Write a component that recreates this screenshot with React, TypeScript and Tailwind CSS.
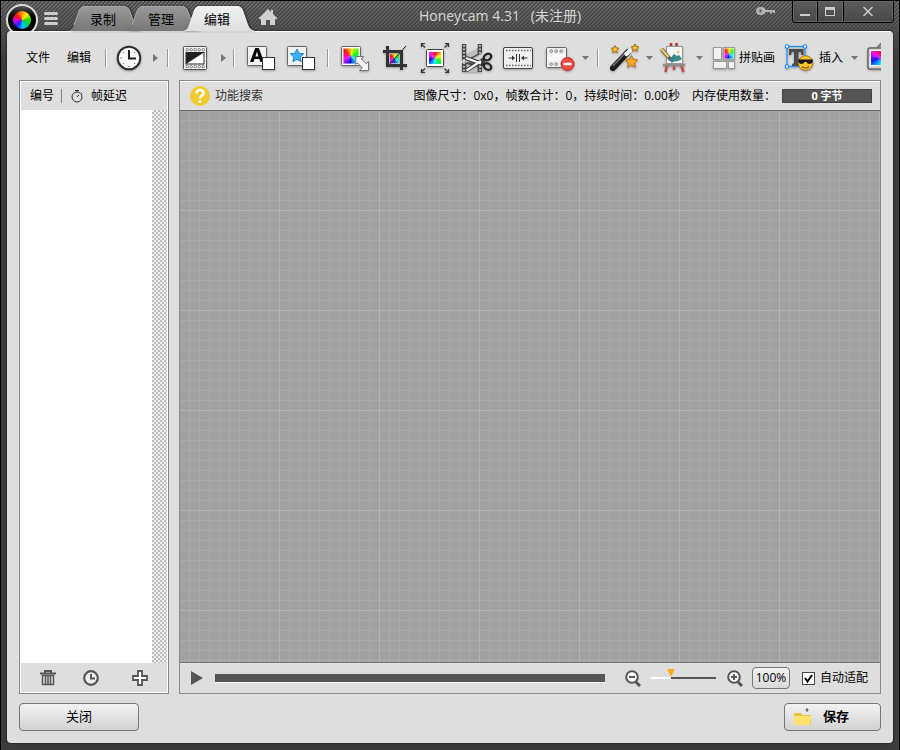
import { useState } from "react";
import type { ReactNode } from "react";
import clsx from "clsx";

const WEDGES = 24;

type WheelProps = {
  x: number;
  y: number;
  width: number;
  height: number;
  start?: number;
};

// hue wheel clipped to a rectangle, used by most of the image tools
function Wheel({ x, y, width, height, start = -60 }: WheelProps) {
  const slices = Array.from({ length: WEDGES }, (_, i) => {
    const a = ((start - 90 + (i * 360) / WEDGES) * Math.PI) / 180;
    const b = ((start - 90 + ((i + 1.2) * 360) / WEDGES) * Math.PI) / 180;
    const points = `0,0 ${20 * Math.cos(a)},${20 * Math.sin(a)} ${20 * Math.cos(b)},${20 * Math.sin(b)}`;
    return <polygon key={i} points={points} fill={`hsl(${(i * 360) / WEDGES} 90% 50%)`} />;
  });

  return (
    <svg x={x} y={y} width={width} height={height} viewBox="-10 -10 20 20" preserveAspectRatio="none">
      {slices}
    </svg>
  );
}

function Icon({ children, className = "w-8" }: { children: ReactNode; className?: string }) {
  return (
    <svg
      viewBox={className === "w-7" ? "0 0 28 32" : "0 0 32 32"}
      className={clsx("h-8 shrink-0 drop-shadow-[0_1px_1px_rgba(0,0,0,0.3)]", className)}
      aria-hidden="true"
    >
      {children}
    </svg>
  );
}

function Holes({ y, from = 6, to = 26, step = 5 }: { y: number; from?: number; to?: number; step?: number }) {
  const holes = [];
  for (let x = from; x <= to; x += step) holes.push(x);
  return (
    <>
      {holes.map((x) => (
        <rect key={x} x={x - 1} y={y - 1} width="2.4" height="2.4" rx="1" fill="#fff" stroke="#666" strokeWidth=".9" />
      ))}
    </>
  );
}

const Star = ({ x, y, r, fill, stroke }: { x: number; y: number; r: number; fill: string; stroke: string }) => {
  const points = Array.from({ length: 10 }, (_, i) => {
    const radius = i % 2 ? r * 0.48 : r;
    const a = (i * Math.PI) / 5 - Math.PI / 2;
    return `${x + radius * Math.cos(a)},${y + radius * Math.sin(a)}`;
  }).join(" ");
  return <polygon points={points} fill={fill} stroke={stroke} strokeLinejoin="round" />;
};

const ClockIcon = () => (
  <Icon>
    <circle cx="16" cy="16" r="11.3" fill="#f8f8f8" stroke="#2d2d2d" strokeWidth="2" />
    <path d="M16 8v8.5h7" fill="none" stroke="#222" strokeWidth="2" />
    <path d="M16 25v-1M7.5 16h1M10 10l.6.6M22 10l-.6.6M10 22l.6-.6M22 22l-.6-.6" stroke="#333" />
  </Icon>
);

const FadeIcon = () => (
  <Icon>
    <rect x="4.5" y="4.5" width="23" height="23" rx="1" fill="#f3f3f3" stroke="#555" />
    <Holes y={7.5} from={8} to={24} step={4} />
    <Holes y={24.5} from={8} to={24} step={4} />
    <rect x="7" y="10.5" width="18" height="11.5" fill="#fff" stroke="#222" />
    <path d="M7 22V10.5h18z" fill="#222" />
  </Icon>
);

const TextFrameIcon = () => (
  <Icon>
    <rect x="2.5" y="4.5" width="19" height="19" rx="1" fill="#f1f1f1" stroke="#666" />
    <path d="M5 20 10.2 6h3.6L19 20h-3.7l-1-3H9.5l-1 3zm5.4-5.6h3L12 9.6z" fill="#080808" />
    <rect x="17.5" y="15.5" width="12" height="12" fill="#fff" stroke="#333" />
  </Icon>
);

const StarFrameIcon = () => (
  <Icon>
    <rect x="2.5" y="4.5" width="19" height="19" rx="1" fill="#f1f1f1" stroke="#666" />
    <Star x={12} y={14} r={7} fill="#3db4f5" stroke="#1d83cf" />
    <rect x="17.5" y="15.5" width="12" height="12" fill="#fff" stroke="#333" />
  </Icon>
);

const ResizeIcon = () => (
  <Icon>
    <rect x="2.5" y="4.5" width="19" height="19" rx="1" fill="#fff" stroke="#666" />
    <Wheel x={4.5} y={6.5} width={15} height={15} />
    <path
      d="M17 14.5h7.5l-2.3 2.3 5 5 2.3-2.3V28.5h-9l2.8-2.7-5-5-1.8 1.7z"
      fill="#f5f5f5"
      stroke="#777"
    />
  </Icon>
);

const CropIcon = () => (
  <Icon>
    <Wheel x={11} y={12} width={9} height={9} />
    <path d="M10 23 27 4" stroke="#222" />
    <path d="M8.5 4v19.500H28M4 9.5h18.500V28" fill="none" stroke="#333" strokeWidth="3" />
  </Icon>
);

const FitIcon = () => (
  <Icon>
    <rect x="7.5" y="7.5" width="17" height="17" rx="1" fill="#fff" stroke="#444" />
    <Wheel x={10} y={10} width={12} height={12} start={0} />
    <path
      d="M2.5 5V1.500H6M2 1.500l4 4M26 1.500h3.500V5M29.500 1.500l-4 4M2.500 27v3.500H6M2 30.500l4-4M26 30.500h3.500V27M29.500 30.500l-4-4"
      fill="none"
      stroke="#3b3b3b"
      strokeWidth="1.2"
      strokeDasharray="7 0"
    />
  </Icon>
);

const CutIcon = () => (
  <Icon>
    <path d="M1 2h20v9L8 18H1zM1 21l8-1 12 5v5H1z" fill="#4c4c4c" />
    <path d="M5.5 2h11v10L7 17H5.500zM5.500 22l11 3v5h-11z" fill="#bdbdbd" />
    <path d="M5.500 2h11v4l-11 6z" fill="#dcdcdc" />
    <path d="M3 3v27M19 3v27" stroke="#e8e8e8" strokeWidth="1.500" strokeDasharray="1.500 2" />
    <path d="M5 28.500 24 17" stroke="#333" strokeWidth="4" />
    <path d="M5 16 24 23" stroke="#333" strokeWidth="4" />
    <path d="M5.500 28.500 20 19M5 16l15 5.500" stroke="#f5f5f5" strokeWidth="2.200" />
    <ellipse cx="26.5" cy="15" rx="4" ry="3" transform="rotate(-30 26.5 15)" fill="none" stroke="#222" strokeWidth="2.2" />
    <ellipse cx="26.5" cy="24.5" rx="4" ry="3" transform="rotate(30 26.5 24.5)" fill="none" stroke="#222" strokeWidth="2.2" />
  </Icon>
);

const TrimIcon = () => (
  <Icon>
    <rect x="1.5" y="5.5" width="29" height="21" rx="1.5" fill="#f0f0f0" stroke="#444" />
    <path d="M4 8.5h25M4 23.5h25" stroke="#666" strokeWidth="1.5" strokeDasharray="1.5 1.5" />
    <path d="M14.5 12v8M17.5 12v8" stroke="#333" />
    <path d="M6.500 16h5M25.500 16h-5" stroke="#333" />
    <path d="m10 13.5 3 2.5-3 2.500zM22 13.500 19 16l3 2.500z" fill="#333" />
  </Icon>
);

const RemoveFramesIcon = () => (
  <Icon>
    <rect x="3.5" y="5.500" width="20" height="20" rx="1" fill="#eee" stroke="#666" />
    <Holes y={9} from={8} to={18} step={5} />
    <Holes y={22} from={8} to={13} step={5} />
    <path d="M4 12.500h19v6H4z" fill="#fafafa" />
    <circle cx="24.5" cy="22" r="6.500" fill="#ef4a42" stroke="#bd2522" />
    <path d="M20.500 22h8" stroke="#fff" strokeWidth="2.500" />
  </Icon>
);

const EffectsIcon = () => (
  <Icon>
    <path d="M4 26 19 10" stroke="#1c1c1c" strokeWidth="6" strokeLinecap="round" />
    <path d="m4 24 12-13" stroke="#777" strokeWidth="1.5" />
    <path d="m17.500 12 3-3" stroke="#f6f6f6" strokeWidth="4.500" strokeLinecap="round" />
    <Star x={6} y={7.5} r={4} fill="#ffc02e" stroke="#a97213" />
    <Star x={26} y={6} r={4} fill="#ffc02e" stroke="#a97213" />
    <Star x={22.5} y={20} r={6.500} fill="#ffad26" stroke="#b06d0e" />
  </Icon>
);

const PaintIcon = () => (
  <Icon>
    <path d="m9.500 21-2 9M22.500 21l3 9M16 23v5" stroke="#c9483c" strokeWidth="2.500" />
    <path d="M13 1v5M18.500 1v5" stroke="#b3392f" strokeWidth="2.500" />
    <rect x="8.500" y="4.500" width="16" height="17" fill="#f2f4f5" stroke="#999" />
    <path d="M5 23h22" stroke="#8d8d8d" strokeWidth="2.500" />
    <path d="M11 18c3 2 9 2 13-1l-3-4-2 1-3-2z" fill="#3d8a86" />
    <circle cx="20" cy="10" r="1.200" fill="#ffb84d" />
    <path d="M3.500 7 13 18" stroke="#665533" strokeWidth="3.500" />
    <path d="m3.500 7 7 8" stroke="#f0cf6d" strokeWidth="2.200" />
    <path d="m12 16 3 4" stroke="#2e7fa6" strokeWidth="3" />
  </Icon>
);

const CollageIcon = () => (
  <Icon className="w-7">
    <rect x="3.5" y="5.5" width="8" height="12" fill="#f1f1f1" stroke="#999" />
    <rect x="13.5" y="5.5" width="11" height="12" fill="#fff" stroke="#999" />
    <Wheel x={14.5} y={6.5} width={9} height={10} />
    <rect x="3.5" y="19.5" width="13" height="7" fill="#f1f1f1" stroke="#999" />
    <rect x="18.5" y="19.5" width="6" height="7" fill="#f1f1f1" stroke="#999" />
  </Icon>
);

const InsertIcon = () => (
  <Icon>
    <path d="M6 7h14.500v6h-2l-1-3h-2v11l2 1v2H9v-2l2-1V10H9l-1 3H6z" fill="#4d4d4d" />
    <rect x="4" y="4.5" width="18" height="20" fill="none" stroke="#1a8fff" strokeWidth="1.200" />
    <path d="M2.5 3h3v3h-3zM20.5 3h3v3h-3zM2.5 23h3v3h-3z" fill="#fff" stroke="#1a8fff" />
    <circle cx="22.5" cy="21" r="7.300" fill="#ffc629" stroke="#a56f0f" />
    <path d="M15 17.500h15l-.5 2.500c-1 2.500-5 2.500-6 0h-2c-1 2.500-5 2.500-6 0z" fill="#191919" />
    <path d="M19 24.500c2 2 5 2 7 0" fill="none" stroke="#8b5309" strokeWidth="1.200" />
  </Icon>
);

const MonitorIcon = () => (
  <Icon>
    <path d="m16 1-5 5" stroke="#777" strokeWidth="2" />
    <rect x="2" y="6" width="28" height="21" rx="2" fill="#d8d8d8" stroke="#666" strokeWidth="1.500" />
    <rect x="4" y="8" width="24" height="16" fill="#fff" />
    <Wheel x={5} y={9} width={22} height={14} start={0} />
  </Icon>
);

type ToolProps = {
  label: string;
  children: ReactNode;
  className?: string;
};

function Tool({ label, children, className }: ToolProps) {
  return (
    <button type="button" aria-label={label} className={clsx("flex shrink-0 items-center", className)}>
      {children}
    </button>
  );
}

function Separator({ className = "ml-[9px]" }: { className?: string }) {
  return <span className={clsx("mr-2.5 h-[18px] w-[2px] shrink-0 border-l border-r border-l-[#999] border-r-white", className)} />;
}

function More({ right = false, className }: { right?: boolean; className?: string }) {
  return (
    <button type="button" aria-label="更多" className={clsx("shrink-0", className)}>
      {right ? (
        <svg viewBox="0 0 5 8" className="h-2 w-[5px]">
          <path d="M0 0 5 4 0 8z" fill="#777" />
        </svg>
      ) : (
        <svg viewBox="0 0 7 4" className="h-1 w-[7px]">
          <path d="M0 0h7L3.5 4z" fill="#777" />
        </svg>
      )}
    </button>
  );
}

function Toolbar() {
  return (
    <div className="flex h-12 items-center overflow-hidden pt-1 text-xs">
      <button type="button" className="ml-[7px] shrink-0">文件</button>
      <button type="button" className="ml-[17px] shrink-0">编辑</button>
      <Separator className="ml-3.5" />
      <Tool label="时间" className="-ml-1"><ClockIcon /></Tool>
      <More right className="ml-2" />
      <Separator />
      <Tool label="淡入淡出"><FadeIcon /></Tool>
      <More right className="ml-2.5" />
      <Separator className="ml-[7px]" />
      <div className="flex shrink-0 gap-2">
        <Tool label="文字帧"><TextFrameIcon /></Tool>
        <Tool label="图形帧"><StarFrameIcon /></Tool>
      </div>
      <Separator className="ml-2.5" />
      <div className="flex shrink-0 gap-2">
        <Tool label="调整大小"><ResizeIcon /></Tool>
        <Tool label="裁剪"><CropIcon /></Tool>
        <Tool label="适应"><FitIcon /></Tool>
      </div>
      <div className="ml-2.5 flex shrink-0 gap-[9px]">
        <Tool label="剪切帧"><CutIcon /></Tool>
        <Tool label="修剪"><TrimIcon /></Tool>
        <Tool label="删除帧"><RemoveFramesIcon /></Tool>
      </div>
      <More className="ml-[7px]" />
      <Separator className="ml-2" />
      <Tool label="效果"><EffectsIcon /></Tool>
      <More className="ml-[5px]" />
      <Tool label="绘画" className="ml-[5px]"><PaintIcon /></Tool>
      <More className="ml-1.5" />
      <Tool label="拼贴画" className="ml-[7px] gap-px"><CollageIcon />拼贴画</Tool>
      <Tool label="插入" className="ml-2 gap-1"><InsertIcon />插入</Tool>
      <More className="ml-2" />
      <Tool label="显示" className="ml-2"><MonitorIcon /></Tool>
    </div>
  );
}

function Tab({ label, active = false, className }: { label: string; active?: boolean; className?: string }) {
  return (
    <button
      type="button"
      className={clsx("relative flex h-[25px] items-center justify-center pt-0.5 pr-1 text-[13px] text-black", className)}
    >
      <svg
        viewBox="0 0 74 25"
        preserveAspectRatio="none"
        className="absolute inset-0 h-full w-full drop-shadow-[1px_0_1px_rgba(0,0,0,0.5)]"
        aria-hidden="true"
      >
        <defs>
          <linearGradient id={active ? "tab-on" : "tab-off"} x2="0" y2="1">
            <stop stopColor={active ? "#f1f1f1" : "#999"} />
            <stop offset="1" stopColor={active ? "#dedede" : "#777"} />
          </linearGradient>
        </defs>
        <path
          d="M0 25c4-1 5-3 6-6L11 5c1-3 3-5 6-5h38c4 0 6 2 7 5l5 14c1 3 3 5 7 6z"
          fill={active ? "url(#tab-on)" : "url(#tab-off)"}
        />
        {!active && <path d="M6 19 11 5c1-3 3-4.500 6-4.500h38c4 0 6 2 7 5l5 14" fill="none" stroke="#a8a8a8" />}
      </svg>
      <span className="relative">{label}</span>
    </button>
  );
}

function TitleBar() {
  return (
    <header className="relative flex h-[31px] items-end border-t border-black pl-[5px]">
      <div className="h-[27px] w-8 overflow-hidden">
        <div className="flex h-8 w-8 items-center justify-center rounded-full border-2 border-[#ddd] bg-linear-to-b from-[#555] via-black to-black">
          <div className="h-[18px] w-[18px] rounded-full bg-[conic-gradient(from_-50deg,#f11,#f80,#fe0,#3d0,#0c6,#0bf,#22f,#c0e,#f11)]" />
        </div>
      </div>
      <button type="button" aria-label="菜单" className="mb-1.5 ml-1.5 flex w-3.5 flex-col gap-[2px]">
        <span className="h-[3px] rounded-full bg-[#ccc]" />
        <span className="h-[3px] rounded-full bg-[#ccc]" />
        <span className="h-[3px] rounded-full bg-[#ccc]" />
      </button>
      <nav className="ml-2.5 flex">
        <Tab label="录制" className="w-[74px]" />
        <Tab label="管理" className="-ml-4 w-[74px]" />
        <Tab label="编辑" active className="z-10 -ml-[17px] w-[72px]" />
      </nav>
      <button type="button" aria-label="主页" className="mb-1.5 ml-1">
        <svg viewBox="0 0 18 16" className="h-4 w-[18px]">
          <path d="M9 0 12 3V1h2v4l4 4v1h-2v6h-5v-5H7v5H2v-6H0V9z" fill="#d0d0d0" />
        </svg>
      </button>
      <h1 className="absolute right-[100px] left-[200px] top-1 text-center text-sm leading-[22px] whitespace-pre text-[#d6d6d6]">
        Honeycam 4.31   (未注册)
      </h1>
      <div className="ml-auto flex items-start self-start">
        <button type="button" aria-label="注册" className="mt-1 mr-4">
          <svg viewBox="0 0 20 12" className="h-3 w-5">
            <path
              d="M5 2c2.5 0 4 1 4.500 3H19v3h-2V7h-1v1.500h-2V7H9.500C9 9 7.500 10 5 10 2 10 0 8.500 0 6s2-4 5-4zM3.500 4.500v3h2v-3z"
              fillRule="evenodd"
              fill="#b5b5b5"
            />
          </svg>
        </button>
        <div className="mr-[5px] flex h-[22px] overflow-hidden rounded-b border border-t-0 border-black bg-linear-to-b from-[#5c5c5c] to-[#474747] text-[#ccc]">
          <button type="button" aria-label="最小化" className="flex w-6 justify-center border border-[#666] pt-[12px]">
            <span className="h-[2px] w-2.5 bg-[#ccc]" />
          </button>
          <button type="button" aria-label="最大化" className="flex w-[26px] justify-center border border-[#666] border-l-black pt-[5px]">
            <span className="h-[9px] w-2.5 border border-t-[3px] border-[#ccc]" />
          </button>
          <button type="button" aria-label="关闭窗口" className="flex w-[50px] justify-center border border-[#666] border-l-black pt-[5px]">
            <svg viewBox="0 0 10 9" className="h-[9px] w-2.5">
              <path d="m.5 0 9 9M9.500 0l-9 9" stroke="#ccc" strokeWidth="1.500" />
            </svg>
          </button>
        </div>
      </div>
    </header>
  );
}

function FrameList() {
  return (
    <section className="flex w-[150px] shrink-0 flex-col border border-[#8a8a8a] bg-[#dedede]">
      <div className="border border-b-0 border-white">
        <table className="h-7 w-full text-left text-xs">
          <thead>
            <tr>
              <th className="w-10 pl-[9px] font-normal">编号</th>
              <th className="font-normal">
                <span className="flex items-center">
                  <span className="h-3.5 w-px bg-[#888]" />
                  <svg viewBox="0 0 14 14" className="mr-[7px] ml-2 h-3.5 w-3.5" fill="none" stroke="#333">
                    <circle cx="7" cy="8" r="5" />
                    <path d="M5 1.500h4M7 1.500V3M11.500 3.500l1 1M7 8l2-2" />
                  </svg>
                  帧延迟
                </span>
              </th>
            </tr>
          </thead>
        </table>
      </div>
      <div className="flex flex-1 justify-end border-r border-white bg-white">
        <div className="w-[15px] bg-[repeating-conic-gradient(#bdbdbd_0_25%,#efefef_0_50%)] bg-[length:4px_4px]" />
      </div>
      <div className="flex h-[30px] items-center border border-t-0 border-white pl-[19px]">
        <button type="button" aria-label="删除">
          <svg viewBox="0 0 16 16" className="h-4 w-4" fill="none" stroke="#555">
            <path d="M0 3.500h16M5 3V1h6v2" strokeWidth="2" />
            <path d="M2.500 5.500v9h11v-9zM5.500 6v8M8 6v8M10.500 6v8" strokeWidth="1.500" />
          </svg>
        </button>
        <button type="button" aria-label="延迟" className="ml-[27px]">
          <svg viewBox="0 0 16 16" className="h-4 w-4" fill="none" stroke="#555">
            <circle cx="8" cy="8" r="6.800" fill="#eee" strokeWidth="2.200" />
            <path d="M8 4v4.500h4" strokeWidth="2" />
          </svg>
        </button>
        <button type="button" aria-label="添加" className="ml-[33px]">
          <svg viewBox="0 0 16 16" className="h-4 w-4">
            <path d="M6 1h4v5h5v4h-5v5H6v-5H1V6h5z" fill="#fff" stroke="#555" strokeWidth="1.800" />
          </svg>
        </button>
      </div>
    </section>
  );
}

function ZoomGlass({ plus = false }: { plus?: boolean }) {
  return (
    <svg viewBox="0 0 16 17" className="h-[17px] w-4" fill="none" stroke="#555">
      <path d="m11 12 4 4" strokeWidth="3" />
      <circle cx="7" cy="7" r="5.800" fill="#fff" strokeWidth="2" />
      <path d={plus ? "M4 7h6M7 4v6" : "M4 7h6"} strokeWidth="2" />
    </svg>
  );
}

function Preview() {
  const [zoom, setZoom] = useState(28);
  const [autoFit, setAutoFit] = useState(true);

  return (
    <section className="flex min-w-0 flex-1 flex-col border border-[#8a8a8a] bg-[#dedede] text-xs">
      <div className="flex h-[30px] items-center border-t border-b border-t-white border-b-[#666] pr-2 pl-2.5 whitespace-nowrap">
        <button type="button" className="flex items-center gap-[5px] text-[#333]">
          <svg viewBox="0 0 20 20" className="h-5 w-5">
            <circle cx="10" cy="10" r="10" fill="#f2ca2f" />
            <path d="M6.500 7.500c0-5 7.500-4.500 7 0-.3 2.300-3.500 2.200-3.500 5" fill="none" stroke="#fff" strokeWidth="2.500" />
            <circle cx="10" cy="15.500" r="1.500" fill="#fff" />
          </svg>
          功能搜索
        </button>
        <p className="ml-auto">图像尺寸：0x0，帧数合计：0，持续时间：0.00秒</p>
        <p className="ml-3">内存使用数量：</p>
        <p className="ml-[6px] h-3.5 w-[90px] border border-[#444] bg-[#555] text-center text-[11px] leading-3 font-bold text-white">
          0 字节
        </p>
      </div>
      <div className="flex-1 bg-[#a1a1a1] bg-[linear-gradient(to_right,#b3b3b3_1px,transparent_1px),linear-gradient(to_bottom,#b3b3b3_1px,transparent_1px),linear-gradient(to_right,#aaa_1px,transparent_1px),linear-gradient(to_bottom,#aaa_1px,transparent_1px)] bg-[size:100px_100px,100px_100px,10px_10px,10px_10px] bg-[position:-1px_-1px]" />
      <div className="flex h-[31px] items-center border-t border-[#777] pr-3 pl-[11px]">
        <button type="button" aria-label="播放">
          <svg viewBox="0 0 12 14" className="h-3.5 w-3">
            <path d="M0 0 12 7 0 14z" fill="#555" />
          </svg>
        </button>
        <input
          type="range"
          aria-label="进度"
          defaultValue={0}
          className="ml-3 h-[9px] min-w-0 flex-1 appearance-none border-b border-white bg-[#555] [&::-webkit-slider-thumb]:h-0 [&::-webkit-slider-thumb]:w-0 [&::-webkit-slider-thumb]:appearance-none"
        />
        <button type="button" aria-label="缩小" className="ml-5">
          <ZoomGlass />
        </button>
        <input
          type="range"
          aria-label="缩放"
          value={zoom}
          onChange={(e) => setZoom(Number(e.target.value))}
          className="mr-[11px] ml-2.5 h-5 w-[65px] appearance-none bg-[linear-gradient(to_right,#fff_30%,#555_30%)] bg-[length:100%_2px] bg-center bg-no-repeat [&::-webkit-slider-thumb]:mb-2.5 [&::-webkit-slider-thumb]:h-2 [&::-webkit-slider-thumb]:w-2 [&::-webkit-slider-thumb]:appearance-none [&::-webkit-slider-thumb]:bg-[#ffac1c] [&::-webkit-slider-thumb]:[clip-path:polygon(0_0,100%_0,50%_100%)]"
        />
        <button type="button" aria-label="放大">
          <ZoomGlass plus />
        </button>
        <button
          type="button"
          className="ml-[9px] h-[22px] w-[38px] rounded border border-[#777] bg-linear-to-b from-[#f2f2f2] to-[#d8d8d8] text-xs leading-5"
        >
          100%
        </button>
        <label className="relative ml-3 flex items-center gap-[5px]">
          <input
            type="checkbox"
            checked={autoFit}
            onChange={(e) => setAutoFit(e.target.checked)}
            className="peer h-[13px] w-[13px] appearance-none border border-[#444] bg-white"
          />
          <svg viewBox="0 0 13 13" className="pointer-events-none absolute left-0 hidden h-[13px] w-[13px] peer-checked:block">
            <path d="m3 6 2.500 3.500L10 3" fill="none" stroke="#000" strokeWidth="2" />
          </svg>
          自动适配
        </label>
      </div>
    </section>
  );
}

export default function App() {
  return (
    <div className="flex min-h-screen flex-col border-r border-l border-black bg-[#3c3c3c] bg-[linear-gradient(to_bottom,transparent,#3c3c3c_60px),linear-gradient(135deg,#4c4c4c_25%,#6c6c6c_25%_50%,#4c4c4c_50%_75%,#6c6c6c_75%)] bg-[size:100%_100%,4px_4px] font-['Open_Sans','Noto_Sans_CJK_SC',sans-serif] text-black">
      <TitleBar />
      <main className="mx-[6px] mb-[7px] flex flex-1 flex-col rounded-sm border-t border-white bg-[#dedede] px-3 pb-3 shadow-[0_0_2px_#000]">
        <Toolbar />
        <div className="flex flex-1 gap-2.5">
          <FrameList />
          <Preview />
        </div>
        <footer className="mt-[9px] flex justify-between text-[13px]">
          <button
            type="button"
            className="h-7 w-[120px] rounded border border-[#777] bg-linear-to-b from-[#f2f2f2] to-[#d2d2d2]"
          >
            关闭
          </button>
          <button
            type="button"
            className="flex h-7 w-[97px] items-center rounded border border-[#777] bg-linear-to-b from-[#f2f2f2] to-[#d2d2d2] pl-2 font-bold"
          >
            <svg viewBox="0 0 20 20" className="mr-2.5 h-5 w-5">
              <path d="M1 6h7l1 2h9v10H1z" fill="#eac545" />
              <path d="M1 9h17l-1 9H1z" fill="#ffe26b" />
              <path d="M14 1v4M12.500 3h3" stroke="#555" />
            </svg>
            保存
          </button>
        </footer>
      </main>
    </div>
  );
}
